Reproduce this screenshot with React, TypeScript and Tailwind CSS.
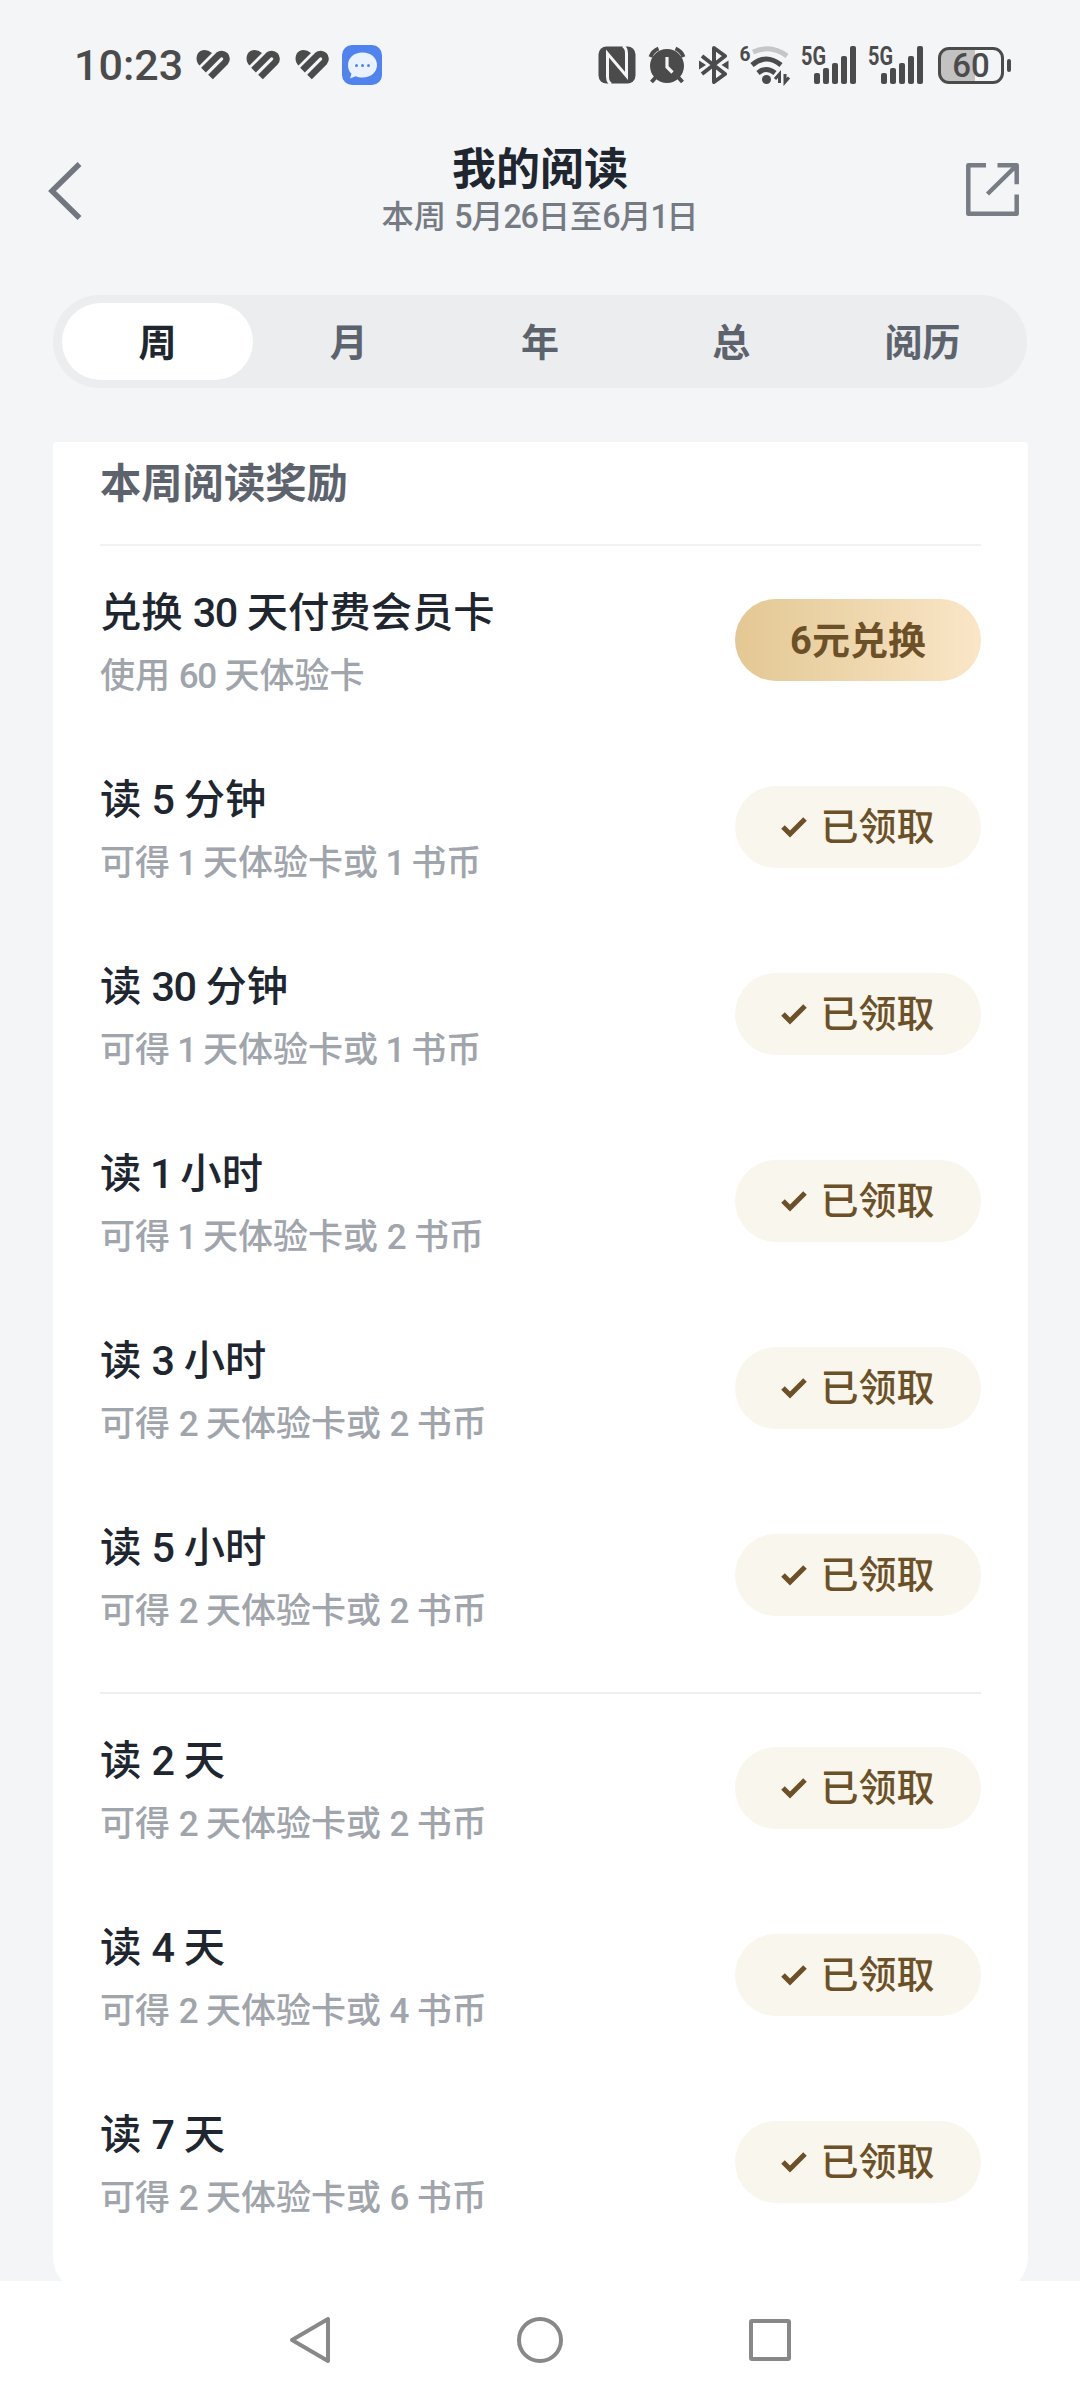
import React from "react";

const REWARDS = [
  { id: 1, title: "读 5 分钟", desc: "可得 1 天体验卡或 1 书币" },
  { id: 2, title: "读 30 分钟", desc: "可得 1 天体验卡或 1 书币" },
  { id: 3, title: "读 1 小时", desc: "可得 1 天体验卡或 2 书币" },
  { id: 4, title: "读 3 小时", desc: "可得 2 天体验卡或 2 书币" },
  { id: 5, title: "读 5 小时", desc: "可得 2 天体验卡或 2 书币" },
];

const DAY_REWARDS = [
  { id: 6, title: "读 2 天", desc: "可得 2 天体验卡或 2 书币" },
  { id: 7, title: "读 4 天", desc: "可得 2 天体验卡或 4 书币" },
  { id: 8, title: "读 7 天", desc: "可得 2 天体验卡或 6 书币" },
];

const TABS = ["周", "月", "年", "总", "阅历"];

export default function App() {
  return (
    <div className="flex h-[2398px] w-[1080px] flex-col overflow-hidden bg-[#f3f5f7] font-['Roboto','Noto_Sans_CJK_SC',sans-serif] text-[#20262f]">
      <StatusBar />
      <Header />
      <Tabs />

      {/* Reward card, runs under the navigation bar */}
      <main className="mt-[54px] h-[1839px] overflow-hidden px-[53px]">
        <section className="h-[1851px] w-[975px] rounded-t-[4px] rounded-b-[36px] bg-white px-[47px]">
          <h2 className="flex h-[102px] items-center pb-[17px] text-[41.3px] leading-none font-bold text-[#5d636d]">
            本周阅读奖励
          </h2>
          <div className="h-[2px] bg-[#f1f2f3]" />
          <RewardRow title="兑换 30 天付费会员卡" desc="使用 60 天体验卡" redeem />
          {REWARDS.map((r) => (
            <RewardRow key={r.id} title={r.title} desc={r.desc} />
          ))}
          <div className="mt-[24px] h-[2px] bg-[#eeeff0]" />
          {DAY_REWARDS.map((r) => (
            <RewardRow key={r.id} title={r.title} desc={r.desc} />
          ))}
        </section>
      </main>

      <NavBar />
    </div>
  );
}

// Digits are set tighter than the Chinese text around them, a lone 1 most of all
function Mixed({ text }: { text: string }) {
  return (
    <>
      {text.split(/(\d+)/).map((part, i) =>
        /\d/.test(part) ? (
          <span
            key={i}
            className={part === "1" ? "-ml-[0.04em] tracking-[-0.08em]" : "tracking-[-0.04em]"}
          >
            {part}
          </span>
        ) : (
          part
        )
      )}
    </>
  );
}

function Header() {
  return (
    <header className="flex h-[167px] items-start justify-between pr-[61px] pl-[46px]">
      <svg className="mt-[32px] h-[62px] w-[38px]" viewBox="0 0 38 62" fill="none" stroke="#72777f" strokeWidth="5.5">
        <path d="M33.5 4 6 31l27.500 27" />
      </svg>
      <div className="flex flex-col items-center pl-[30px]">
        <h1 className="mt-[20px] text-[44px] leading-[44px] font-bold">我的阅读</h1>
        <p className="mt-[9px] text-[32.3px] leading-[32px] font-medium whitespace-pre text-[#757a83]">
          <Mixed text="本周 5月26日至6月1日" />
        </p>
      </div>
      <svg
        className="mt-[35px] h-[53px] w-[53px]"
        viewBox="0 0 53 53"
        fill="none"
        stroke="#787d85"
        strokeWidth="4.5"
        strokeLinejoin="round"
      >
        <path d="M20 2.300H2.300v48.400h48.400V31.500M31.500 2.300h19.200v19M50 3 21.500 31" />
      </svg>
    </header>
  );
}

function Tabs() {
  return (
    <nav className="mx-[53px] flex h-[93px] items-center rounded-full bg-[#ebedee] px-[9px]">
      {TABS.map((tab, i) => (
        <button
          key={tab}
          className={
            i === 0
              ? "h-[77px] flex-1 rounded-full bg-white pt-[2px] text-[38px] leading-none font-bold text-[#20262f]"
              : "h-[77px] flex-1 pt-[2px] text-[38px] leading-none font-bold text-[#5d636d]"
          }
        >
          {tab}
        </button>
      ))}
    </nav>
  );
}

function RewardRow({
  title,
  desc,
  redeem = false,
}: {
  title: string;
  desc: string;
  redeem?: boolean;
}) {
  return (
    <div className="flex h-[187px] items-center justify-between">
      <div className="pt-[6px]">
        <div className="text-[41.3px] leading-[50px] font-medium">
          <Mixed text={title} />
        </div>
        <div className="mt-[18px] text-[35px] leading-[42px] font-medium text-[#a0a4ab]">
          <Mixed text={desc} />
        </div>
      </div>
      {redeem ? (
        <button className="h-[82px] w-[246px] rounded-full bg-linear-to-r from-[#e3c893] to-[#fae6c8] pt-[2px] text-[38px] leading-none font-bold text-[#6c5128]">
          6元兑换
        </button>
      ) : (
        <div className="flex h-[82px] w-[246px] items-center justify-center gap-[13px] rounded-full bg-[#f9f6ed] text-[38px] leading-none font-medium text-[#6c5128]">
          <svg className="h-[22px] w-[26px]" viewBox="0 0 26 22" fill="none" stroke="currentColor" strokeWidth="5">
            <path d="M2 11l7 7L24 3" />
          </svg>
          已领取
        </div>
      )}
    </div>
  );
}

function StatusBar() {
  return (
    <div className="flex h-[128px] items-start justify-between pt-[44px] pr-[69px] pl-[74px] text-[#4b4b4b]">
      <div className="flex h-[42px] items-center">
        <span className="w-[122px] text-[43px] leading-none font-medium">10:23</span>
        <HeartIcon />
        <HeartIcon />
        <HeartIcon />
        <svg className="-ml-[3px] h-[40px] w-[40px]" viewBox="0 0 40 40">
          <rect width="40" height="40" rx="10" fill="#5183ef" />
          <path
            d="M20.500 7.500c8.500 0 14.500 5.300 14.500 12.500s-6 12.500-14.500 12.500c-2.500 0-5-.5-7-1.300L8 33.500l1.500-4.700C7 26.500 6 23.500 6 20c0-7.200 6-12.500 14.500-12.500z"
            fill="#eaf2fe"
          />
          <g fill="#5183ef">
            <circle cx="14.500" cy="20.500" r="1.500" />
            <circle cx="20.500" cy="20.500" r="1.500" />
            <circle cx="26.500" cy="20.500" r="1.500" />
          </g>
        </svg>
      </div>
      <div className="flex h-[42px] items-center">
        <NfcIcon />
        <svg className="mr-[13px] h-[38px] w-[38px]" viewBox="0 0 38 38">
          <circle cx="19" cy="20" r="17" fill="currentColor" />
          <path d="M19 11v10l5.500 5.500" fill="none" stroke="#f3f5f7" strokeWidth="3.200" />
          <path
            d="M2.500 11q2-6 8-8.500M35.500 11q-2-6-8-8.500M8 31l-4.500 5M30 31l4.500 5"
            fill="none"
            stroke="currentColor"
            strokeWidth="4"
          />
        </svg>
        <svg className="mr-[11px] h-[38px] w-[30px]" viewBox="0 0 30 38" fill="none" stroke="currentColor" strokeWidth="4">
          <path d="M3 10l23 18-11 8V2l11 8L3 28" strokeLinejoin="round" />
          <path d="M0 14.500l7 4.500-7 4.500zM29.500 14.500l-7 4.500 7 4.500z" fill="currentColor" stroke="none" />
        </svg>
        <WifiIcon />
        <SignalIcon />
        <SignalIcon />
        <div className="ml-[3px] flex h-[37px] w-[66px] items-center justify-center rounded-[11px] border-[3.5px] border-[#4b4b4b] bg-linear-to-r from-[#c2c2c2] from-57% to-[#f3f5f7] to-57% text-[33px] leading-none font-medium">
          60
        </div>
        <div className="ml-[3px] h-[13px] w-[4px] rounded-full bg-[#4b4b4b]" />
      </div>
    </div>
  );
}

function HeartIcon() {
  return (
    <svg className="mr-[14.5px] h-[32px] w-[35px]" viewBox="0 0 35 32">
      <path d="M3.500 16.500C-2 11 .5 1 8.500 1q4 0 7.500 3z" fill="currentColor" />
      <path
        d="M7.500 21.100 22.500 6.100a4.900 4.900 0 0 1 6.900 6.900L14.500 28"
        fill="none"
        stroke="currentColor"
        strokeWidth="6.600"
      />
    </svg>
  );
}

function NfcIcon() {
  return (
    <svg className="mr-[12px] h-[38px] w-[38px]" viewBox="0 0 38 38">
      <rect x="0.500" y="0.500" width="37" height="37" rx="8" fill="currentColor" />
      <path
        d="M13 38q-3.500-2-3.500-7V7.500L28.500 30V7q0-5-3.500-7"
        fill="none"
        stroke="#f3f5f7"
        strokeWidth="3"
      />
    </svg>
  );
}

function WifiIcon() {
  return (
    <svg className="mr-[11px] h-[38px] w-[50px] overflow-visible" viewBox="0 0 50 38" fill="none" stroke="currentColor">
      <text x="-0.500" y="15" fontSize="21" fontWeight="700" textLength="11" lengthAdjust="spacingAndGlyphs" fill="currentColor" stroke="none">
        6
      </text>
      <path d="M13 6q18-8 34 4" stroke="#c4c6c7" strokeWidth="5" />
      <path d="M12 19q14-12 29 0M18 27q8-7 17 0" strokeWidth="5" />
      <circle cx="26.500" cy="33.500" r="4.500" fill="currentColor" stroke="none" />
      <path d="M35 33l4.500-5v9M45 28v8l4-4.500" strokeWidth="3" />
    </svg>
  );
}

function SignalIcon() {
  return (
    <svg className="mr-[11px] h-[38px] w-[56px] overflow-visible" viewBox="0 0 56 38" fill="currentColor">
      <text x="0" y="18.500" fontSize="25" fontWeight="700" textLength="25" lengthAdjust="spacingAndGlyphs">
        5G
      </text>
      <rect x="13" y="27" width="6" height="11" rx="2" />
      <rect x="22" y="22" width="6" height="16" rx="2" />
      <rect x="31" y="17" width="6" height="21" rx="2" />
      <rect x="40" y="10" width="6" height="28" rx="2" />
      <rect x="49" y="0" width="6" height="38" rx="2" />
    </svg>
  );
}

function NavBar() {
  return (
    <footer className="flex h-[117px] items-center justify-between bg-white px-[286px]">
      <svg className="h-[48px] w-[48px]" viewBox="0 0 48 48" fill="none" stroke="#888" strokeWidth="4">
        <path d="M42 3v42L6 24z" strokeLinejoin="round" />
      </svg>
      <svg className="h-[48px] w-[48px]" viewBox="0 0 48 48" fill="none" stroke="#888" strokeWidth="4">
        <circle cx="24" cy="24" r="21" />
      </svg>
      <svg className="h-[48px] w-[48px]" viewBox="0 0 48 48" fill="none" stroke="#888" strokeWidth="4">
        <rect x="5" y="5" width="38" height="38" rx="1" />
      </svg>
    </footer>
  );
}
